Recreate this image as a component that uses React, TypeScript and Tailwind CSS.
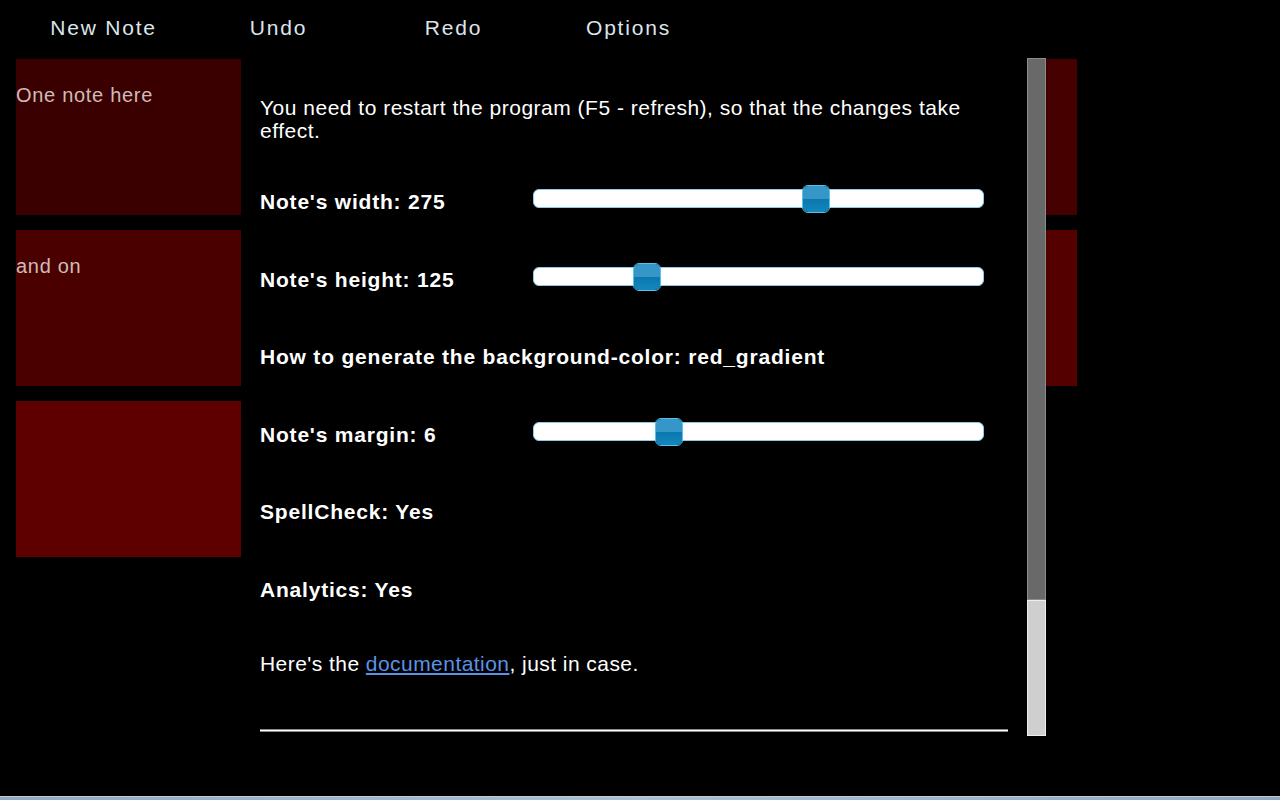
import React from "react";

// Sticky-notes board with its Options dialog open on top.
const menu = ["New Note", "Undo", "Redo", "Options"];

function Slider({ pos }: { pos: number }) {
  return (
    <div className="relative -mt-[6px] h-[19px] w-[451px] rounded-[6px] border border-[#8ccbe8] bg-white">
      <div
        className="absolute top-[-5px] h-[28px] w-[28px] overflow-hidden rounded-[6px] border border-[#56c0ee]"
        style={{ left: pos }}
      >
        <div className="h-1/2 bg-[#3597c8]" />
        <div className="h-1/2 bg-gradient-to-b from-[#0a78ae] to-[#1487bd]" />
      </div>
    </div>
  );
}

function Row({ label, slider }: { label: string; slider?: number }) {
  return (
    <div className="flex h-[77.5px] items-center">
      <div
        className={`${slider !== undefined ? "w-[273px]" : ""} whitespace-nowrap text-[21px] font-bold tracking-[0.8px] text-white`}
      >
        {label}
      </div>
      {slider !== undefined && <Slider pos={slider} />}
    </div>
  );
}

export default function App() {
  return (
    <div
      className="relative flex h-[800px] w-[1280px] flex-col overflow-hidden bg-black"
      style={{ fontFamily: '"Liberation Sans", Arial, sans-serif' }}
    >
      <nav className="flex h-[55px] items-center pl-[16px]">
        {menu.map((m) => (
          <div key={m} className="w-[175px] text-center text-[21px] tracking-[1.8px] text-[#dde5ec]">
            {m}
          </div>
        ))}
      </nav>

      <div className="relative flex flex-1 pt-[4px]">
        <div className="ml-[16px] flex w-[225px] flex-col gap-[15px]">
          <div className="h-[156px] bg-[#3a0000] text-[20px] leading-[72px] tracking-[0.7px] text-[#cdbcbc]">
            One note here
          </div>
          <div className="h-[156px] bg-[#4b0000] text-[20px] leading-[72px] tracking-[0.7px] text-[#cdbcbc]">
            and on
          </div>
          <div className="h-[156px] bg-[#5e0000]" />
        </div>
        <div className="ml-[611px] flex w-[225px] flex-col gap-[15px]">
          <div className="h-[156px] bg-gradient-to-r from-[#2e0000] via-[#3c0000] to-[#470000]" />
          <div className="h-[156px] bg-gradient-to-r from-[#420000] via-[#4c0000] to-[#560000]" />
        </div>

        {/* options dialog */}
        <div className="absolute left-[241px] top-[3px] flex h-[678px] w-[805px] rounded-tl-[12px] bg-black">
          <div className="flex-1 pl-[19px] pr-[19px] pt-[38px]">
            <p className="text-[21px] leading-[23px] tracking-[0.5px] text-white">
              You need to restart the program (F5 - refresh), so that the changes take effect.
            </p>
            <div className="mt-[21px]">
              <Row label="Note's width: 275" slider={268} />
              <Row label="Note's height: 125" slider={99} />
              <Row label="How to generate the background-color: red_gradient" />
              <Row label="Note's margin: 6" slider={121} />
              <Row label="SpellCheck: Yes" />
              <Row label="Analytics: Yes" />
            </div>
            <p className="mt-[20px] text-[21px] tracking-[0.45px] text-white">
              Here's the <a className="text-[#5a93e6] underline" href="#">documentation</a>, just in case.
            </p>
            <div className="mt-[49px] h-[3px] w-[748px] border-y border-[#8a8a8a] bg-white" />
          </div>
          <div className="flex w-[19px] flex-col">
            <div className="h-[542px] border border-[#8c8c8c] bg-[#696969]" />
            <div className="flex-1 border border-[#eeeeee] bg-[#cfcfcf]" />
          </div>
        </div>
      </div>

      <div className="h-[4px] border-t border-[#c9c9c9] bg-gradient-to-r from-[#90aac4] via-[#a9c0d6] to-[#8ea8c2]" />
    </div>
  );
}
